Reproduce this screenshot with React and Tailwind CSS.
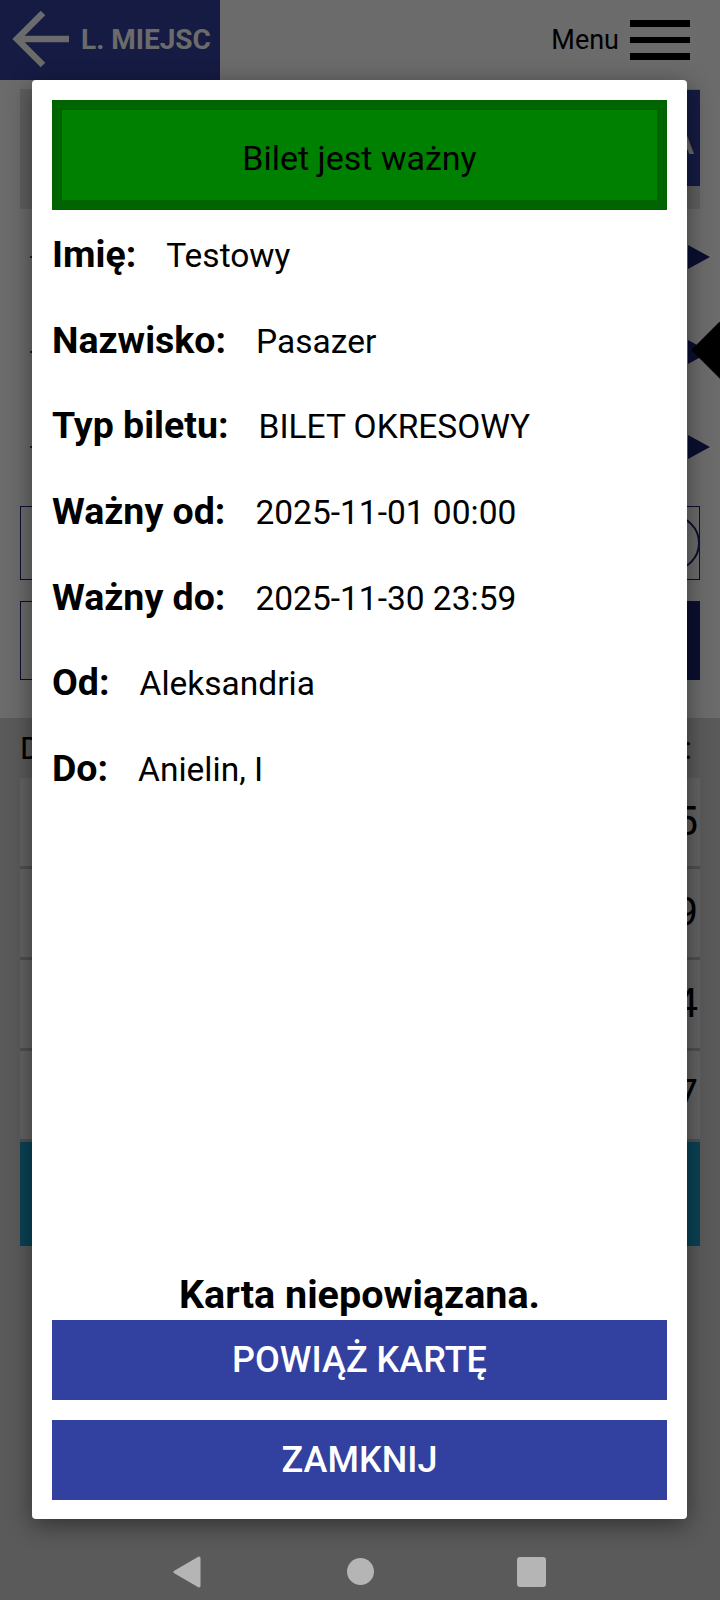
import React from 'react'

const FONT = { fontFamily: 'Roboto, "Noto Sans", "Liberation Sans", sans-serif' }

const TICKET = [
  ['Imię:', 'Testowy'],
  ['Nazwisko:', 'Pasazer'],
  ['Typ biletu:', 'BILET OKRESOWY'],
  ['Ważny od:', '2025-11-01 00:00'],
  ['Ważny do:', '2025-11-30 23:59'],
  ['Od:', 'Aleksandria'],
  ['Do:', 'Anielin, I'],
]

const LIST = ['5', '9', '4', '7']

function Header() {
  return (
    <div className="flex h-[80px] shrink-0 justify-between bg-white">
      <div className="flex w-[220px] items-center bg-[#3240a0] pl-[12px]">
        <svg width="58" height="58" viewBox="0 0 58 58" fill="none" stroke="white" strokeWidth="6.5">
          <path d="M57 28H6" />
          <path d="M31 2L5 28l26 26" />
        </svg>
        <span className="ml-[11px] text-[28px] font-bold leading-none text-white">L. MIEJSC</span>
      </div>
      <div className="flex items-center pr-[30px]">
        <span className="text-[27px] leading-none text-black">Menu</span>
        <div className="ml-[11px] flex w-[60px] flex-col gap-[10px]">
          <div className="h-[7px] bg-black" />
          <div className="h-[6px] bg-black" />
          <div className="h-[7px] bg-black" />
        </div>
      </div>
    </div>
  )
}

function Background() {
  return (
    <div className="flex h-full flex-col">
      <Header />
      <div className="flex h-[638px] shrink-0 flex-col bg-white px-[20px] pt-[9px]">
        <div className="flex h-[120px] justify-end bg-[#e2e2e2]">
          <div className="mt-[1px] flex h-[96px] w-[240px] items-center justify-end bg-[#3240a0] pr-[6px] pt-[10px] text-[30px] font-bold text-white">
            ZMIANA
          </div>
        </div>
        <div className="flex flex-col">
          {[0, 1, 2].map((i) => (
            <div key={i} className="relative flex h-[95px] items-center justify-between">
              <div className="ml-[10px] h-[2px] w-[8px] bg-[#3240a0]" />
              <svg width="22" height="24" viewBox="0 0 22 24" className="mr-[-10px]">
                <path d="M0 0L22 12L0 24Z" fill="#1c2470" />
              </svg>
              {i === 1 && (
                <div className="absolute right-[-42px] top-[25px] h-[42px] w-[42px] rotate-45 bg-black" />
              )}
            </div>
          ))}
        </div>
        <div className="mt-[12px] flex h-[74px] items-center justify-end border-[1.5px] border-[#1c2470]">
          <div className="mr-[-1px] h-[56px] w-[56px] rounded-full border-[2px] border-[#1c2470]" />
        </div>
        <div className="mt-[21px] flex h-[79px] justify-end border-[1.5px] border-[#1c2470]">
          <div className="w-[120px] bg-[#1c2470]" />
        </div>
      </div>
      <div className="flex flex-1 flex-col bg-[#d6d6d6] px-[20px]">
        <div className="flex h-[60px] items-center justify-between text-[32px] text-black">
          <span>Data</span>
          <span className="mr-[8px]">Cena:</span>
        </div>
        <div className="flex flex-col">
          {LIST.map((n) => (
            <div key={n} className="flex h-[91px] items-center justify-end border-b-[3px] border-[#bdbdbd] bg-[#ebebeb] text-[40px] text-black">
              <span className="mr-[2px]">1{n}</span>
            </div>
          ))}
        </div>
        <div className="h-[104px] bg-[#1a9dca]" />
      </div>
    </div>
  )
}

function Dialog() {
  return (
    <div className="absolute left-[32px] top-[80px] flex h-[1439px] w-[655px] flex-col rounded-[4px] bg-white p-[20px] pb-[19px] shadow-[0_6px_24px_rgba(0,0,0,0.45)]">
      <div className="flex h-[110px] shrink-0 items-center justify-center border-[10px] border-[#006400] bg-[#008000] pt-[6px] text-[34px] text-black">
        Bilet jest ważny
      </div>
      <div className="mt-[2px] flex flex-1 flex-col">
        {TICKET.map(([label, value]) => (
          <div key={label} className="flex h-[85.67px] items-baseline leading-[85.33px]">
            <span className="text-[37.5px] font-bold text-black">{label}</span>
            <span className="ml-[30px] text-[33.5px] text-black">{value}</span>
          </div>
        ))}
      </div>
      <div className="mb-[2px] text-center text-[39.5px] font-bold leading-[46px] text-black">
        Karta niepowiązana.
      </div>
      <button className="flex h-[80px] items-center justify-center bg-[#3240a0] text-[36px] font-medium text-white">
        POWIĄŻ KARTĘ
      </button>
      <button className="mt-[20px] flex h-[80px] items-center justify-center bg-[#3240a0] text-[36px] font-medium text-white">
        ZAMKNIJ
      </button>
    </div>
  )
}

function NavBar() {
  return (
    <div className="absolute bottom-0 left-0 flex h-[80px] w-full items-start pt-[36px]">
      <div className="ml-[172px]">
        <svg width="29" height="32" viewBox="0 0 29 32">
          <path d="M27 2L3 16L27 30Z" fill="#b5b5b5" stroke="#b5b5b5" strokeWidth="3" strokeLinejoin="round" />
        </svg>
      </div>
      <div className="ml-[146px] mt-[2px] h-[27px] w-[27px] rounded-full bg-[#b5b5b5]" />
      <div className="ml-[143px] mt-[1px] h-[30px] w-[29px] rounded-[3px] bg-[#b5b5b5]" />
    </div>
  )
}

export default function App() {
  return (
    <div className="relative h-[1600px] w-[720px] overflow-hidden bg-[#d6d6d6]" style={FONT}>
      <Background />
      <div className="absolute inset-0 bg-black/[0.58]" />
      <Dialog />
      <NavBar />
    </div>
  )
}
